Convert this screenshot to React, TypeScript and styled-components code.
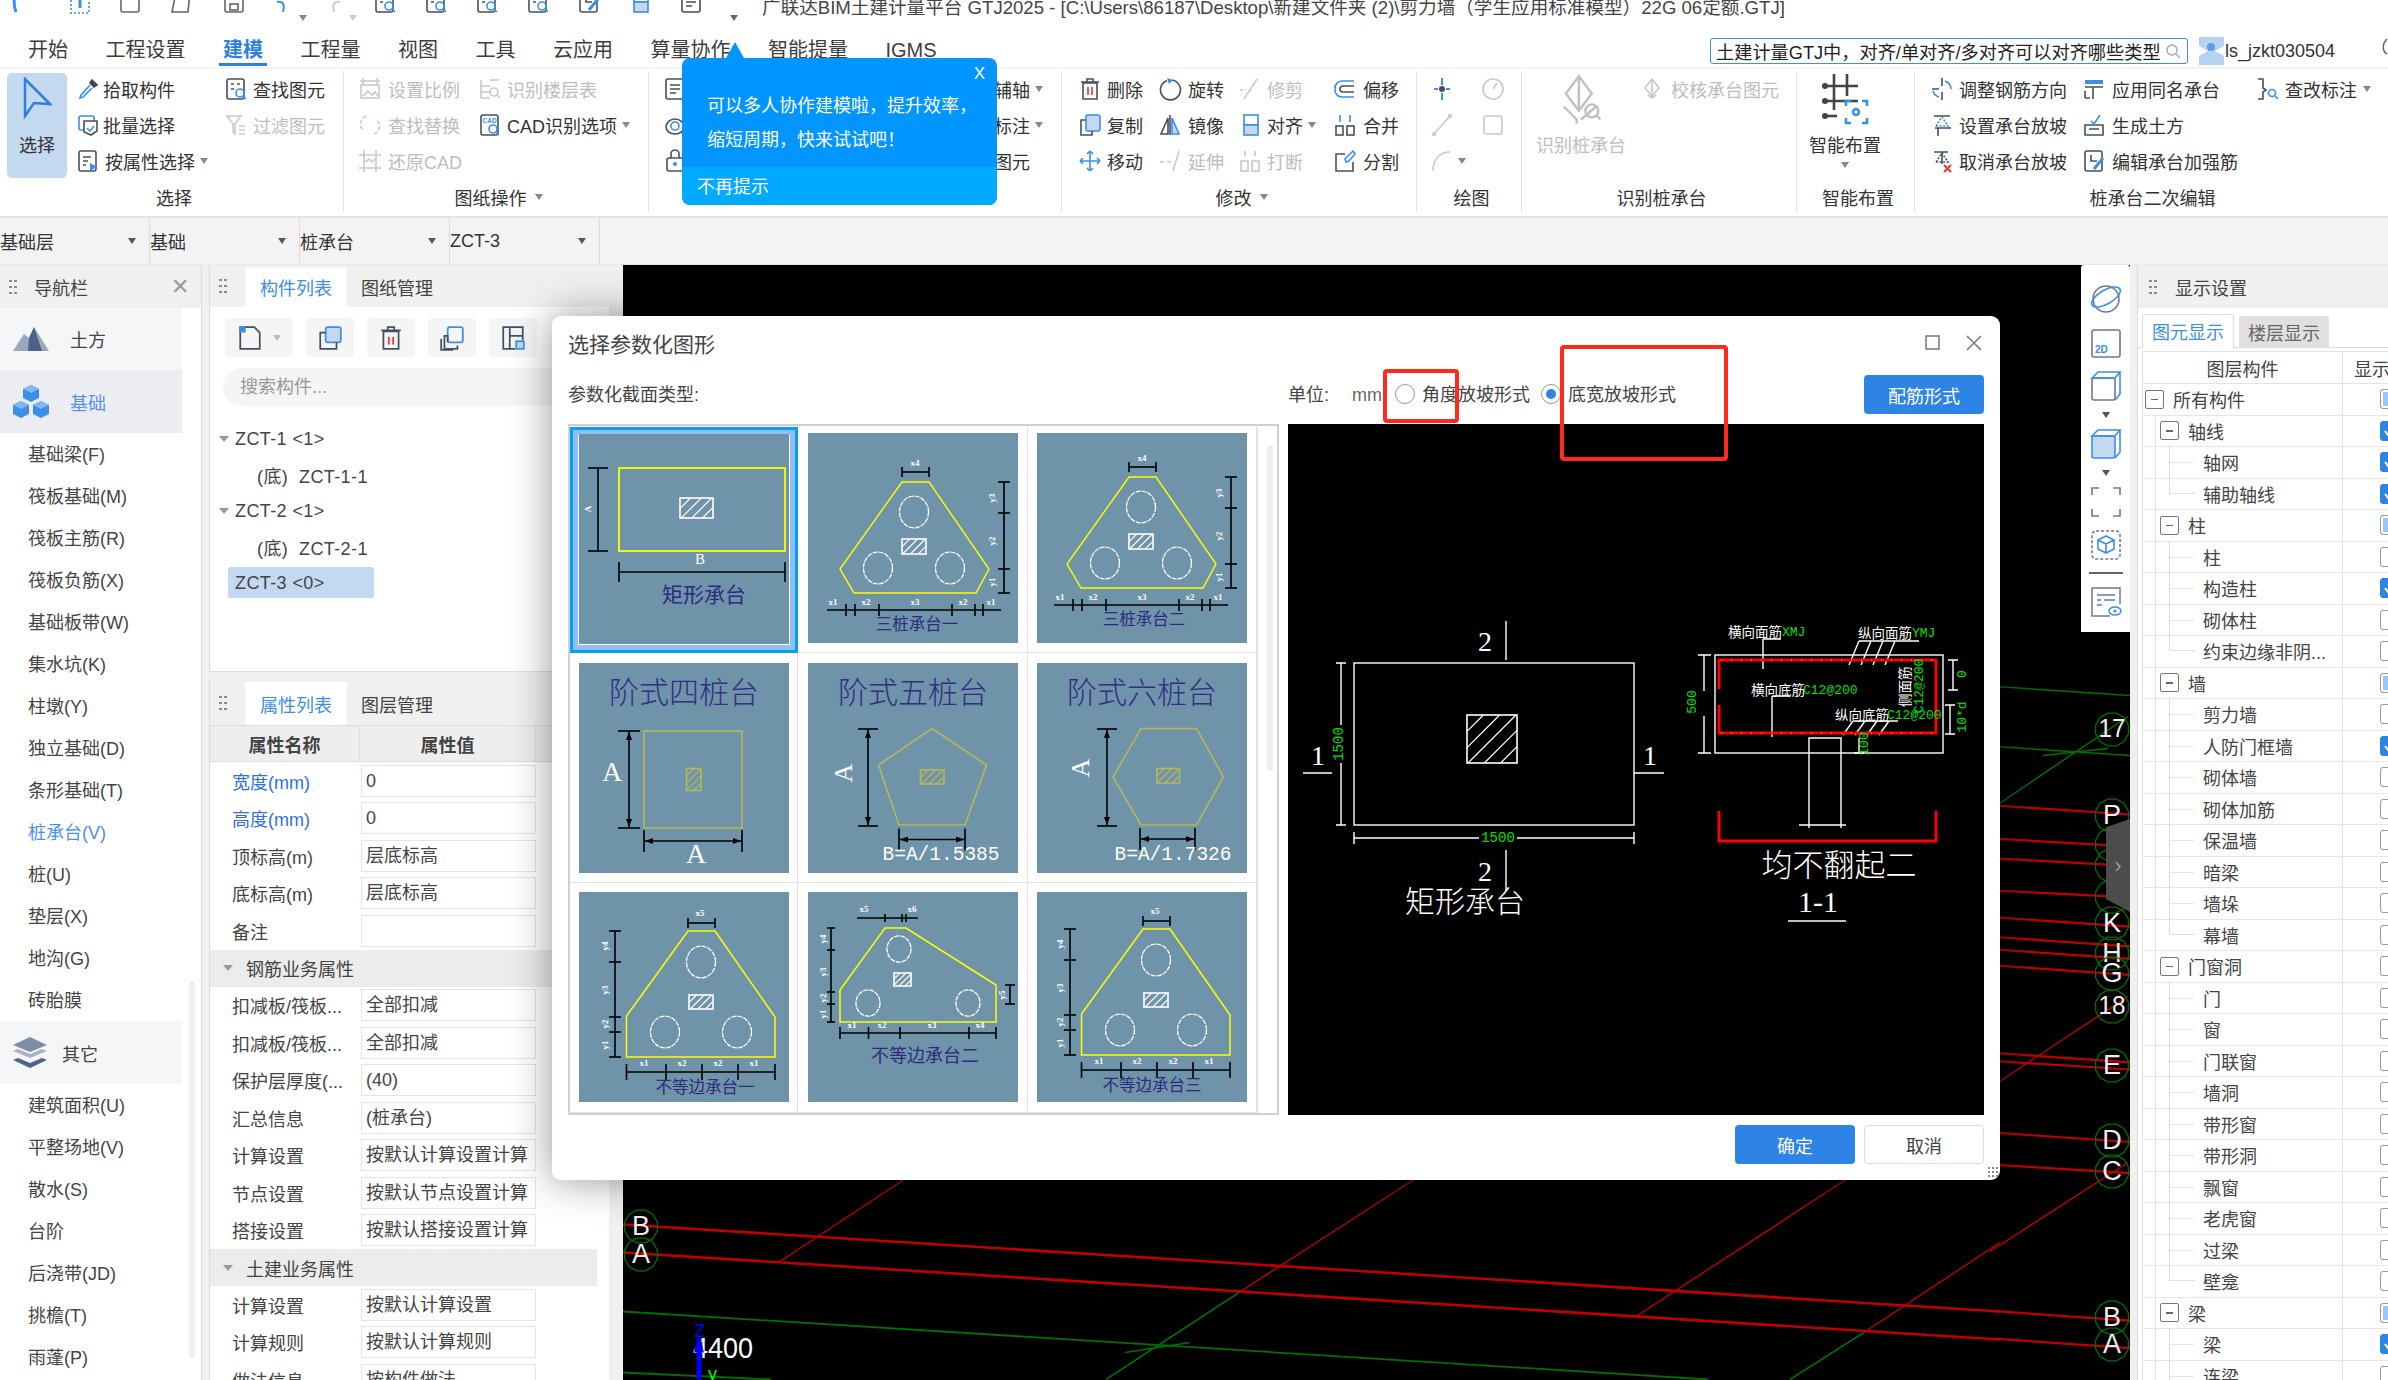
import React from 'react';
import styled, { createGlobalStyle } from 'styled-components';

const FONT = '"Liberation Sans","Noto Sans CJK SC",sans-serif';
const SERIF = '"Liberation Serif","Noto Sans CJK SC",serif';
const MONO = '"Liberation Mono","Noto Sans CJK SC",monospace';
const BLUE = '#3b8fe8';
const INK = '#465061';
const DIS = '#c9c9c9';

const Global = createGlobalStyle`
  html, body { margin: 0; padding: 0; background: #fff; }
  #root { width: 2388px; height: 1380px; }
  * { box-sizing: border-box; }
`;

const Page = styled.div`
  position: relative; width: 2388px; height: 1380px; overflow: hidden;
  display: flex; flex-direction: column; background: #fff;
  font-family: ${FONT}; font-size: 18px; color: #333;
`;

/* ---------- title bar ---------- */
const TitleBar = styled.div`
  height: 35px; flex: none; display: flex; align-items: flex-start; overflow: hidden;
`;
const TitleSlot = styled.div<{ $w: number }>`
  width: ${p => p.$w}px; flex: none; margin-top: -10px; height: 24px;
`;
const TitleText = styled.div`
  font-size: 18.6px; line-height: 18px; margin-top: -1px; margin-left: -14px; white-space: nowrap; color: #444;
`;

/* ---------- tabs ---------- */
const TabsRow = styled.div`
  height: 32px; flex: none; display: flex; padding-left: 28px; gap: 37.5px; align-items: flex-start;
  position: relative; z-index: 1;
`;
const MenuTab = styled.div<{ $on?: boolean }>`
  position: relative; font-size: 20px; line-height: 30px; color: ${p => (p.$on ? '#2d7fe0' : '#3d3d3d')};
  font-weight: ${p => (p.$on ? 600 : 400)};
  ${p => p.$on && `&::after{content:'';position:absolute;left:-4px;right:-4px;top:28px;height:3px;background:#2d7fe0;}`}
`;
const SearchArea = styled.div`
  margin-left: auto; display: flex; align-items: center; height: 26px; margin-top: 3px; padding-right: 0;
`;
const SearchBox = styled.div`
  width: 478px; height: 26px; border: 1.5px solid ${BLUE}; border-radius: 3px; display: flex; align-items: center;
  padding: 0 5px; justify-content: space-between; color: #222; font-size: 18.2px; white-space: nowrap; overflow: hidden;
`;
const UserName = styled.div`
  font-size: 18px; width: 155px; color: #333; white-space: nowrap; flex: none;
`;

/* ---------- ribbon ---------- */
const Ribbon = styled.div`
  height: 151px; flex: none; display: flex; border-top: 2px solid #f4f4f4; border-bottom: 2px solid #e4e4e4;
`;
const RGroup = styled.div<{ $w: number; $last?: boolean }>`
  width: ${p => p.$w}px; flex: none; display: flex; flex-direction: column; margin: 2px 0 5px;
  border-right: ${p => (p.$last ? 'none' : '1px solid #dfdfdf')};
`;
const RBody = styled.div<{ $pl?: number }>`
  flex: none; height: 111px; display: flex; padding-left: ${p => p.$pl ?? 0}px;
`;
const RLabel = styled.div`
  flex: 1; display: flex; align-items: center; justify-content: center; gap: 8px; font-size: 18px; color: #333; padding-left: 5px;
`;
const Caret = styled.span<{ $c?: string }>`
  display: inline-block; width: 0; height: 0; border-left: 4px solid transparent; border-right: 4px solid transparent;
  border-top: 6px solid ${p => p.$c ?? '#888'};
`;
const RCol = styled.div<{ $w?: number }>`
  flex: none; width: ${p => (p.$w ? p.$w + 'px' : 'auto')}; display: flex; flex-direction: column;
`;
const Tool = styled.div<{ $off?: boolean; $gap?: number }>`
  height: 36.2px; display: flex; align-items: center; gap: ${p => p.$gap ?? 5}px; white-space: nowrap;
  color: ${p => (p.$off ? '#bdbdbd' : '#333')}; font-size: 18px;
`;
const BigSelect = styled.div`
  width: 60px; height: 105px; background: #c4d9f0; border-radius: 5px; flex: none; margin: 2px 9px 0 7px;
  display: flex; flex-direction: column; align-items: center; padding-top: 4px; gap: 12px; font-size: 18px;
`;
const BigTool = styled.div<{ $w: number; $off?: boolean }>`
  width: ${p => p.$w}px; flex: none; display: flex; flex-direction: column; align-items: center; gap: 5px; padding-top: 3px;
  color: ${p => (p.$off ? '#bdbdbd' : '#333')}; font-size: 18px;
`;

/* ---------- popup ---------- */
const Tip = styled.div`
  position: absolute; left: 682px; top: 58px; width: 315px; height: 147px; background: #0095ff; border-radius: 8px;
  color: #fff; z-index: 5; overflow: visible; display: flex; flex-direction: column;
  &::before { content: ''; position: absolute; left: 44px; top: -16px; width: 0; height: 0;
    border-left: 9px solid transparent; border-right: 9px solid transparent; border-bottom: 16px solid #0095ff; }
`;
const TipClose = styled.div`
  position: absolute; right: 12px; top: 7px; font-size: 17px; font-weight: 300; line-height: 18px;
`;
const TipBody = styled.div`
  flex: 1; padding: 31px 0 0 25px; font-size: 18px; line-height: 34px; white-space: nowrap;
`;
const TipFoot = styled.div`
  height: 38px; background: #00aaff; border-radius: 0 0 8px 8px; padding-left: 15px; font-size: 18px; line-height: 40px;
`;

/* ---------- selector bar ---------- */
const SelectorBar = styled.div`
  height: 47px; flex: none; background: #f3f3f3; display: flex; border-bottom: 1px solid #e8e8e8;
`;
const SelectorCell = styled.div`
  width: 150px; flex: none; display: flex; align-items: center; justify-content: space-between;
  padding-right: 13px; border-right: 1px solid #dcdcdc; color: #333; font-size: 18px;
`;

/* ---------- main ---------- */
const Main = styled.div`
  flex: 1; display: flex; min-height: 0; background: #f0f0f0;
`;
const Nav = styled.div`
  width: 202px; flex: none; background: #fff; position: relative; border-right: 1px solid #ddd;
`;
const PanelHead = styled.div<{ $h?: number }>`
  height: ${p => p.$h ?? 42}px; background: #f0f0f0; display: flex; align-items: stretch; flex: none; font-size: 18px; color: #444;
`;
const Grip = styled.div`
  width: 10px; height: 18px; margin: auto 0 auto 8px; flex: none;
  background-image: radial-gradient(circle, #8a8a8a 1.3px, transparent 1.5px);
  background-size: 5px 6px;
`;
const NavTitle = styled.div`
  flex: 1; display: flex; align-items: center; padding-left: 16px; justify-content: space-between; padding-right: 12px;
`;
const CloseX = styled.span`
  color: #999; font-size: 22px; line-height: 22px; font-weight: 300;
`;
const NavCat = styled.div<{ $on?: boolean; $h: number }>`
  width: 182px; height: ${p => p.$h}px; display: flex; align-items: center; gap: 20px; padding-left: 12px;
  background: ${p => (p.$on ? '#ecedf0' : '#f5f6f8')}; color: ${p => (p.$on ? '#5b8ff0' : '#444')}; font-size: 18px;
`;
const NavItem = styled.div<{ $on?: boolean }>`
  height: 42px; line-height: 45px; padding-left: 28px; font-size: 18px; color: ${p => (p.$on ? '#4a90f0' : '#444')}; white-space: nowrap;
`;
const NavScroll = styled.div`
  position: absolute; left: 189px; top: 716px; width: 6px; height: 377px; background: #eee; border-radius: 3px;
`;

const MidCol = styled.div`
  width: 400px; flex: none; margin-left: 7px; margin-right: 14px; display: flex; flex-direction: column; gap: 8px;
`;
const Panel = styled.div<{ $h: number }>`
  height: ${p => p.$h}px; flex: none; background: #fff; display: flex; flex-direction: column; border: solid #ddd; border-width: 0 0 1.5px 1.5px;
`;
const HeadTab = styled.div<{ $on?: boolean }>`
  width: 102px; display: flex; align-items: center; justify-content: center; margin-top: 2px;
  background: ${p => (p.$on ? '#fff' : 'transparent')}; color: ${p => (p.$on ? BLUE : '#444')};
`;
const ToolRow = styled.div`
  display: flex; padding: 11px 0 0 15px; gap: 13px; height: 50px; flex: none;
`;
const ToolBtn = styled.div<{ $w?: number }>`
  width: ${p => p.$w ?? 48}px; height: 39px; background: #f5f5f5; border-radius: 4px; display: flex; align-items: center; justify-content: center; gap: 10px; flex: none;
`;
const SearchInput = styled.div`
  margin: 11px 0 0 13px; height: 38px; border-radius: 19px 0 0 19px; background: #f5f5f5; color: #999; padding-left: 17px;
  line-height: 38px; font-size: 18px; flex: none;
`;
const Tree = styled.div`
  padding: 15px 0 0 0;
`;
const TreeRow = styled.div<{ $lv?: number; $sel?: boolean }>`
  height: 36px; display: flex; align-items: center; white-space: pre; font-size: 18px; color: #444; letter-spacing: .4px;
  padding-left: ${p => (p.$lv ? 47 : 9)}px; position: relative; gap: 3px;
  ${p => p.$sel && `&::before{content:'';position:absolute;left:18px;width:146px;top:2px;height:31px;background:#c3d9f1;border-radius:3px;z-index:0;}`}
  & > span { position: relative; z-index: 1; }
`;
const TreeGap = styled.span`
  width: 13px; display: inline-block; flex: none;
`;
const Arrow = styled.span`
  width: 0; height: 0; border-left: 5px solid transparent; border-right: 5px solid transparent; border-top: 6px solid #999; flex: none; margin-right: 3px; margin-left: 0;
`;
const TableHead = styled.div`
  height: 37px; flex: none; background: #eee; display: flex; border-top: 1px solid #ddd; border-bottom: 1.5px solid #ddd; font-weight: 600; color: #444;
`;
const HeadCell = styled.div<{ $w: number }>`
  width: ${p => p.$w}px; flex: none; display: flex; align-items: center; justify-content: center; border-right: 1.5px solid #ddd; overflow: hidden;
`;
const PropRow = styled.div`
  height: 37.5px; flex: none; display: flex; align-items: center;
`;
const PropLabel = styled.div<{ $blue?: boolean }>`
  width: 151px; flex: none; padding-left: 22px; color: ${p => (p.$blue ? '#2f6fe4' : '#444')}; white-space: nowrap; overflow: hidden; font-size: 18px;
`;
const PropValue = styled.div`
  width: 175px; height: 32px; border: 1.5px solid #e4e4e4; line-height: 31px; padding-left: 4px; font-size: 18px; color: #444; white-space: nowrap; overflow: hidden;
`;
const Section = styled.div`
  height: 37px; flex: none; background: #ececec; display: flex; align-items: center; padding-left: 13px; gap: 10px; font-size: 18px; color: #444; width: 387px;
`;

/* ---------- canvas ---------- */
const Canvas = styled.div`
  width: 1507px; flex: none; background: #000; position: relative; overflow: hidden;
`;
const CanvasArt = styled.svg`
  position: absolute; inset: 0; width: 100%; height: 100%;
`;
const ViewBar = styled.div`
  position: absolute; right: 0; top: 0; width: 49px; height: 367px; background: #fff; border-radius: 3px 3px 0 0; display: flex;
  flex-direction: column; align-items: center; padding-top: 11px;
`;
const ViewGap = styled.div<{ $h: number }>`
  height: ${p => p.$h}px; flex: none; display: flex; align-items: center; justify-content: center;
`;
const ViewSep = styled.div`
  width: 34px; height: 1.5px; background: #666; flex: none; margin: 4px 0 8px;
`;
const Handle = styled.div`
  position: absolute; right: 0; top: 554px; width: 24px; height: 93px; background: #4c4c4c; color: #999; font-size: 22px;
  clip-path: polygon(0 9%, 100% 0, 100% 100%, 0 86%); display: flex; align-items: center; justify-content: center;
`;

/* ---------- right panel ---------- */
const RightPanel = styled.div`
  width: 251px; flex: none; margin-left: 7px; background: #fff; display: flex; flex-direction: column; overflow: hidden; border-left: 1.5px solid #ddd;
`;
const RightTitle = styled.div`
  flex: 1; display: flex; align-items: center; padding-left: 17px; font-size: 18px; color: #444;
`;
const RTabs = styled.div`
  height: 40px; flex: none; display: flex; align-items: flex-end; padding-left: 4px; gap: 5px; border-bottom: 1.5px solid #ddd;
`;
const RTab = styled.div<{ $on?: boolean }>`
  width: ${p => (p.$on ? 92 : 90)}px; height: ${p => (p.$on ? 35 : 31)}px; display: flex; align-items: center; justify-content: center;
  border-radius: 3px 3px 0 0; font-size: 18px;
  ${p => (p.$on ? `color:${BLUE};border:1.5px solid #ddd;border-bottom:1.5px solid #fff;margin-bottom:-1.5px;background:#fff;` : 'background:#e0e0e0;color:#666;')}
`;
const LayerTable = styled.div`
  margin: 3px 0 0 4px; border-top: 1.5px solid #e2e2e2; border-left: 1.5px solid #e2e2e2;
`;
const LayerHead = styled.div`
  height: 32px; display: flex; border-bottom: 1.5px solid #e2e2e2; font-size: 18px; color: #444;
`;
const LayerName = styled.div`
  width: 200px; flex: none; border-right: 1.5px solid #e2e2e2; display: flex; align-items: center; justify-content: center;
`;
const LayerShow = styled.div`
  padding-left: 11px; display: flex; align-items: center; white-space: nowrap;
`;
const LayerRow = styled.div`
  height: 31.5px; display: flex; border-bottom: 1.5px solid #e6e6e6; font-size: 18px; color: #444;
`;
const LayerCell = styled.div<{ $lv: number; $leafLast?: boolean; $first?: boolean }>`
  width: 200px; flex: none; position: relative; border-right: 1.5px solid #e2e2e2; display: flex; align-items: center; white-space: nowrap;
  padding-left: ${p => (p.$lv === 0 ? 2 : p.$lv === 1 ? 17 : 60)}px; gap: 9px;
  ${p => !p.$first && `&::before{content:'';position:absolute;left:12px;top:-1px;bottom:-1px;width:1px;background:#e2e2e2;}`}
  ${p => p.$lv === 2 && `&::after{content:'';position:absolute;left:26px;top:${p.$leafLast ? '-1px' : '-1px'};bottom:${p.$leafLast ? '50%' : '-1px'};width:25px;border-left:1px solid #ddd;border-bottom:${p.$leafLast ? '1px solid #e2e2e2' : '0'};}`}
`;
const LeafTick = styled.i`
  position: absolute; left: 26px; width: 25px; top: 50%; height: 1px; background: #e6e6e6;
`;
const Expander = styled.span`
  width: 19px; height: 19px; border: 1.5px solid #777; border-radius: 2px; background: #fff; flex: none; position: relative; z-index: 1;
  display: flex; align-items: center; justify-content: center;
  &::after { content: ''; width: 7px; height: 1.5px; background: #666; }
`;
const CheckCell = styled.div`
  padding-left: 37px; display: flex; align-items: center;
`;
const Check = styled.span<{ $s: 0 | 1 | 2 }>`
  width: 20px; height: 20px; flex: none; border-radius: 3px; display: flex; align-items: center; justify-content: center; color: #fff;
  border: 1.5px solid ${p => (p.$s === 1 ? '#2d84e4' : '#999')}; background: ${p => (p.$s === 1 ? '#2d84e4' : '#fff')};
  ${p => p.$s === 2 && `box-shadow: inset 0 0 0 2px #fff; background:#9cc6f5;`}
`;

/* ---------- dialog ---------- */
const Dialog = styled.div`
  position: absolute; left: 552px; top: 316px; width: 1448px; height: 864px; background: #fff; border-radius: 9px; z-index: 4;
  box-shadow: 0 0 42px rgba(0,0,0,.42); padding: 0 16px; display: flex; flex-direction: column;
`;
const DlgHead = styled.div`
  height: 59px; flex: none; display: flex; align-items: center; justify-content: space-between; font-size: 21px; color: #444; padding-bottom: 6px;
`;
const WinBtns = styled.div`
  display: flex; gap: 26px; align-items: center; padding-right: 2px;
`;
const DlgOptions = styled.div`
  height: 49px; flex: none; display: flex; align-items: flex-start;
`;
const OptLabel = styled.div<{ $w?: number; $muted?: boolean }>`
  font-size: 18px; line-height: 40px; color: ${p => (p.$muted ? '#666' : '#444')}; white-space: nowrap;
  ${p => p.$w && `width:${p.$w}px;`}
`;
const OptRight = styled.div`
  margin-left: auto; width: 696px; display: flex; align-items: flex-start;
`;
const Radio = styled.span<{ $on?: boolean }>`
  width: 20px; height: 20px; border-radius: 50%; border: 1.5px solid #999; flex: none; margin: 9px 7px 0 0; background: #fff;
  display: flex; align-items: center; justify-content: center;
  ${p => p.$on && `&::after{content:'';width:10px;height:10px;border-radius:50%;background:#2d84e4;}`}
`;
const PrimaryBtn = styled.div<{ $ml?: string }>`
  width: 120px; height: 39px; border-radius: 4px; background: #2d84e4; color: #fff; display: flex; align-items: center; justify-content: center;
  font-size: 18px; margin-left: ${p => p.$ml ?? '0'}; flex: none;
`;
const GhostBtn = styled.div`
  width: 120px; height: 39px; border-radius: 4px; background: #fff; border: 1.5px solid #ddd; color: #444; display: flex; align-items: center; justify-content: center; font-size: 18px; flex: none;
`;
const DlgBody = styled.div`
  height: 691px; flex: none; display: flex; gap: 9px;
`;
const ShapeFrame = styled.div`
  width: 711px; flex: none; border: 2px solid #d0d0d0; display: flex; padding-top: 1px;
`;
const ShapeGrid = styled.div`
  width: 687px; flex: none; display: grid; grid-template-columns: 228px 230px 229px; grid-template-rows: 226px 230px 230px;
`;
const ShapeCell = styled.div<{ $pt: number; $sel?: boolean }>`
  border: solid #e2e2e2; border-width: 0 1.5px 1.5px 0; display: flex; justify-content: center; padding-top: ${p => p.$pt}px; background: #fff;
  ${p => p.$sel && `border: 3px solid #0a9bff; box-shadow: inset 0 0 0 5px #8dc0f5; padding-top: 4px;`}
`;
const Thumb = styled.svg`
  width: 210px; height: 210px; background: #6f93a8; display: block; flex: none;
`;
const ScrollTrack = styled.div`
  flex: 1; border-left: 1px solid #e2e2e2; padding: 18px 0 0 9px;
`;
const ScrollThumb = styled.div`
  width: 6px; height: 326px; background: #eee; border-radius: 3px;
`;
const Preview = styled.svg`
  width: 696px; height: 691px; background: #000; flex: none; display: block;
`;
const DlgFoot = styled.div`
  flex: 1; display: flex; justify-content: flex-end; gap: 9px; padding-top: 10px;
`;
const ResizeDots = styled.div`
  position: absolute; right: 2px; bottom: 3px; width: 11px; height: 11px;
  background-image: radial-gradient(circle, #8a8a8a 1px, transparent 1.2px); background-size: 4px 4px;
`;
const RedBox = styled.div<{ $x: number; $y: number; $w: number; $h: number }>`
  position: absolute; left: ${p => p.$x}px; top: ${p => p.$y}px; width: ${p => p.$w}px; height: ${p => p.$h}px;
  border: 4px solid #ff2a1a; border-radius: 4px; z-index: 6;
`;

/* ---------- icons ---------- */
const Svg: React.FC<{ s?: number; children: React.ReactNode }> = ({ s = 24, children }) => (
  <svg width={s} height={s} viewBox="0 0 24 24" fill="none" strokeWidth={1.6} style={{ flex: 'none', display: 'block' }}>{children}</svg>
);
const icons: Record<string, React.ReactNode> = {
  pick: <g><path d="M16 3l5 5-3 2-4-4z" fill="#445" stroke="#445" /><path d="M14 8L5 18l-1 3 3-1 9-9" stroke={BLUE} /></g>,
  batch: <g><rect x="3" y="3" width="15" height="14" rx="2" stroke={BLUE} /><path d="M8 8h13v10l-6 4-7-3z" stroke={INK} fill="#fff" /><path d="M11 15l3 3 4-5" stroke={BLUE} /></g>,
  attr: <g><rect x="3" y="2" width="17" height="20" rx="2" stroke={INK} /><path d="M7 8h8M7 12h5M7 16h3" stroke={INK} /><path d="M14 14l7 4-7 4z" fill={BLUE} /></g>,
  find: <g><rect x="3" y="2" width="17" height="20" rx="2" stroke={INK} /><path d="M7 7h3M13 7h3M7 12h3" stroke={INK} /><circle cx="16" cy="16" r="4" stroke={BLUE} /><path d="M19 19l3 3" stroke={BLUE} /></g>,
  filter: <g stroke={DIS}><path d="M3 3h14l-6 8v10l-2-2v-8zM15 13h6M15 17h6M15 21h6" /></g>,
  scale: <g stroke={DIS}><path d="M2 4h20M5 1v6M19 1v6" /><rect x="3" y="8" width="18" height="13" /><path d="M5 19l5-5 4 4 3-3 3 4" /></g>,
  floor: <g stroke={DIS}><path d="M3 3v18h9M3 9h9M3 15h9M12 3H21" /><circle cx="16" cy="15" r="4" /><path d="M19 18l3 3" /></g>,
  replace: <g stroke={DIS}><path d="M8 3C3 5 2 10 3 14l3 4M16 21c5-2 6-7 5-11l-3-4" strokeDasharray="4 2" /></g>,
  cad: <g><rect x="3" y="2" width="17" height="20" rx="2" stroke={INK} /><text x="4.5" y="10" fontSize="6.5" fill={BLUE} stroke="none" fontFamily={FONT} fontWeight="700">CAD</text><circle cx="15" cy="16" r="4" stroke={BLUE} /><path d="M18 19l3 3" stroke={BLUE} /></g>,
  restore: <g stroke={DIS}><path d="M6 1v22M18 1v22M1 6h22M1 19h22" /><path d="M7 13l4-3 3 3 3-3" /></g>,
  c1: <g><rect x="3" y="2" width="18" height="20" rx="2" stroke={INK} /><path d="M7 8h10M7 12h10M7 16h6" stroke={INK} /></g>,
  c2: <g><path d="M3 14a9 8 0 1 1 18 0c0 4-4 7-9 7s-9-3-9-7z" stroke={INK} /><circle cx="12" cy="13" r="4" stroke={BLUE} /></g>,
  c3: <g><rect x="4" y="9" width="16" height="13" rx="2" stroke={INK} /><path d="M8 9V5a4 4 0 0 1 8 0v4" stroke={INK} /><circle cx="12" cy="15" r="2" fill={BLUE} /></g>,
  del: <g><path d="M5 6h14v16H5zM3 5h18M9 5V2h6v3" stroke={INK} /><path d="M10 10v8M14 10v8" stroke="#e33" /></g>,
  rot: <g><path d="M14 3a10 10 0 1 1-5 .5" stroke={INK} /><path d="M9 1l6 2-4 4z" fill={BLUE} /></g>,
  trim: <g stroke={DIS}><path d="M19 2L6 22" /><path d="M2 13h6M11 13h2" strokeDasharray="3 2" /></g>,
  off: <g><path d="M21 4H9a7 7 0 0 0-7 8 7 7 0 0 0 7 8h12" stroke={BLUE} /><path d="M21 9h-11a3 3 0 0 0 0 6h11" stroke={INK} /></g>,
  copy: <g><rect x="8" y="2" width="14" height="16" rx="2" fill="#c4d9f0" stroke={BLUE} /><path d="M8 7H3v15h11v-4" stroke={INK} /></g>,
  mir: <g><path d="M12 2v20" stroke={INK} /><path d="M10 5L3 21h7z" stroke={INK} /><path d="M14 5l7 16h-7z" fill="#c4d9f0" stroke={BLUE} /></g>,
  align: <g><rect x="6" y="2" width="14" height="10" stroke={BLUE} /><rect x="6" y="12" width="14" height="10" fill="#c4d9f0" stroke={BLUE} /></g>,
  merge: <g><path d="M7 2v7M17 2v7" stroke={BLUE} /><rect x="3" y="13" width="7" height="9" stroke={INK} /><rect x="14" y="13" width="7" height="9" stroke={INK} /></g>,
  move: <g stroke={BLUE}><path d="M12 2v20M2 12h20M12 2l-3 3M12 2l3 3M12 22l-3-3M12 22l3-3M2 12l3-3M2 12l3 3M22 12l-3-3M22 12l-3 3" /></g>,
  ext: <g stroke={DIS}><path d="M2 13h4M9 13h4" /><path d="M21 2L15 22" /></g>,
  brk: <g stroke={DIS}><path d="M7 2v5M17 2v5" /><rect x="3" y="12" width="7" height="10" /><rect x="14" y="12" width="7" height="10" /></g>,
  split: <g><path d="M12 5H3v17h17v-9" stroke={INK} /><path d="M20 2l-8 8 1 3 3-1 6-7z" stroke={BLUE} /></g>,
  pt: <g><path d="M12 1v7M12 16v7M4 12h4M16 12h4" stroke={BLUE} strokeWidth="2" /><circle cx="12" cy="12" r="3" fill="#4a4a6a" /></g>,
  ang: <g stroke={DIS}><circle cx="12" cy="12" r="10" /><path d="M12 12l4-6" /></g>,
  line: <g stroke={DIS}><path d="M4 21L20 3" /><circle cx="4" cy="21" r="1.5" /><circle cx="20" cy="3" r="1.5" /></g>,
  rect: <g stroke={DIS}><rect x="3" y="3" width="18" height="18" rx="2" /></g>,
  arc: <g stroke={DIS}><path d="M3 22C3 10 10 3 20 3" /></g>,
  check: <g stroke={DIS}><path d="M12 2l7 9-7 8-7-8zM12 2v17" /><path d="M12 21l-4-3M12 21l4-3" /></g>,
  slope: <g><path d="M4 3h16M5 15h16" stroke={INK} /><path d="M6 13L12 4l6 9z" stroke={BLUE} strokeDasharray="2 1.5" /><path d="M8 15v8" stroke={INK} /></g>,
  unslope: <g><path d="M4 3h14M12 3v12" stroke={INK} /><path d="M6 13L12 4l6 9z" stroke={INK} strokeDasharray="2 1.5" /><path d="M14 16l7 7M21 16l-7 7" stroke="#e33" strokeWidth="2" /></g>,
  rebar: <g><path d="M12 1v8M12 15v8M2 12h7" stroke={INK} /><path d="M15 4a9 9 0 0 1 6 8M9 20a9 9 0 0 1-6-6" stroke={BLUE} /></g>,
  same: <g><path d="M3 3h18v4H3z" fill={BLUE} /><path d="M3 10h18M11 10v12M3 21h5M3 14v7" stroke={INK} /></g>,
  earth: <g><path d="M3 22h18V12H3zM7 16h10" stroke={INK} /><path d="M9 8l3 3 6-9" stroke={BLUE} /></g>,
  edit: <g><rect x="3" y="2" width="17" height="20" rx="2" stroke={INK} /><path d="M9 6v6h6" stroke={INK} /><path d="M21 9l-9 11" stroke={BLUE} strokeWidth="3" /></g>,
  mark: <g><path d="M3 2h5v9l3 2-3 2v7H3" stroke={INK} /><circle cx="17" cy="16" r="3.5" stroke={BLUE} /><path d="M20 19l3 3" stroke={BLUE} /></g>,
};
const I: React.FC<{ n: string; s?: number }> = ({ n, s }) => <Svg s={s}>{icons[n]}</Svg>;

/* ---------- ribbon data ---------- */
const T: React.FC<{ i?: string; t?: string; off?: boolean; gap?: number; dd?: boolean }> = ({ i, t, off, gap, dd }) => (
  <Tool $off={off} $gap={gap}>{i && <I n={i} />}{t && <span>{t}</span>}{dd && <Caret />}</Tool>
);

const TitleCaretSlot = styled(TitleSlot)`
  margin-top: 5px;
`;
const TitleIcons = () => {
  const B = BLUE;
  const slots: [number, React.ReactNode, boolean?][] = [
    [62, <Svg><path d="M12 4C6 8 8 16 10 22" stroke={B} strokeWidth="3" /></Svg>],
    [50, <Svg><rect x="3" y="2" width="18" height="21" stroke={B} strokeDasharray="2 2" /><path d="M12 6v12" stroke={B} strokeWidth="3" /></Svg>],
    [51, <Svg><rect x="3" y="2" width="18" height="20" rx="2" stroke="#666" /></Svg>],
    [53, <Svg><path d="M7 2h14l-2 20H3z" stroke="#666" /></Svg>],
    [49, <Svg><rect x="3" y="2" width="18" height="20" rx="2" stroke="#666" /><rect x="8" y="14" width="8" height="6" stroke="#666" /></Svg>],
    [28, <Svg><path d="M6 12c6-1 8 2 6 10" stroke={B} strokeWidth="2" /></Svg>],
    [23, <Caret />, true],
    [27, <Svg><path d="M18 12c-6-1-8 2-6 10" stroke="#ccc" strokeWidth="2" /></Svg>],
    [24, <Caret $c="#ccc" />, true],
  ];
  const rest = ['find', 'find', 'find', 'find', 'edit', 'align', 'c1'];
  return (
    <>
      <TitleSlot $w={6} />
      {slots.map(([w, n, c], k) => (c
        ? <TitleCaretSlot key={k} $w={w}>{n}</TitleCaretSlot>
        : <TitleSlot key={k} $w={w}>{n}</TitleSlot>))}
      {rest.map((n, k) => <TitleSlot key={k} $w={51}><I n={n} /></TitleSlot>)}
      <TitleCaretSlot $w={46}><Caret $c="#666" /></TitleCaretSlot>
    </>
  );
};

/* ---------- thumbnails ---------- */
const Dim = styled.g`stroke: #000; stroke-width: 1.6; fill: none;`;
const V: React.FC<{ x: number; t: number[]; w?: number }> = ({ x, t, w = 5 }) => (
  <Dim>
    <path d={`M${x} ${t[0]}V${t[t.length - 1]}`} />
    {t.map((y, k) => <path key={k} d={`M${x - w} ${y}H${x + w}`} />)}
  </Dim>
);
const H: React.FC<{ y: number; t: number[]; x1?: number; x2?: number; h?: number }> = ({ y, t, x1, x2, h = 6 }) => (
  <Dim>
    <path d={`M${x1 ?? t[0]} ${y}H${x2 ?? t[t.length - 1]}`} />
    {t.map((x, k) => <path key={k} d={`M${x} ${y - h}V${y + h}`} />)}
  </Dim>
);
const Hatch: React.FC<{ x: number; y: number; w: number; h: number; c?: string; n?: number }> = ({ x, y, w, h, c = '#fff', n = 4 }) => {
  const st = (w + h) / (n + 1);
  const ls = [];
  for (let k = 1; k <= n; k++) {
    const d = k * st;
    const x1 = Math.max(0, d - h), y1 = d > h ? h : d, x2 = Math.min(w, d), y2 = d > w ? d - w : 0;
    ls.push(<path key={k} d={`M${x + x1} ${y + y1}L${x + x2} ${y + y2}`} />);
  }
  return <g stroke={c} strokeWidth="1.2" fill="none"><rect x={x} y={y} width={w} height={h} strokeWidth="1.6" />{ls}</g>;
};
const Pile: React.FC<{ x: number; y: number; r: number }> = ({ x, y, r }) => (
  <ellipse cx={x} cy={y} rx={r} ry={r * 1.1} fill="none" stroke="#fff" strokeWidth="1.3" strokeDasharray="5 1" />
);
const Mini: React.FC<{ x: number; y: number; t: string; r?: boolean }> = ({ x, y, t, r }) => (
  <text x={x} y={y} fontSize="9" fontWeight="700" fill="#fff" fontFamily={SERIF} textAnchor="middle" dominantBaseline="middle" transform={r ? `rotate(-90 ${x} ${y})` : undefined}>{t}</text>
);
const Caption: React.FC<{ x: number; y: number; t: string; s?: number }> = ({ x, y, t, s = 16 }) => (
  <text x={x} y={y} fontSize={s} fill="#2b2b80" fontFamily={SERIF} textAnchor="middle" dominantBaseline="middle">{t}</text>
);
const Big: React.FC<{ x: number; y: number; t: string; r?: boolean; s?: number; f?: string; c?: string; w?: number }> = ({ x, y, t, r, s = 28, f = SERIF, c = '#fff', w }) => (
  <text x={x} y={y} fontSize={s} fill={c} fontFamily={f} fontWeight={w} textAnchor="middle" dominantBaseline="middle" transform={r ? `rotate(-90 ${x} ${y})` : undefined}>{t}</text>
);
const Y = '#ffff00', OL = '#b5b85a', HEAD = '#2f2f85';

const RectThumb = () => (
  <Thumb viewBox="0 0 210 210">
    <rect x="40" y="34" width="166" height="83" fill="none" stroke={Y} strokeWidth="1.8" />
    <V x={19} t={[34, 117]} w={10} />
    <Mini x={10} y={75} t="A" r />
    <Hatch x={101} y={64} w={33} h={20} />
    <H y={138} t={[40, 206]} h={10} />
    <Big x={121} y={127} t="B" s={15} />
    <Caption x={125} y={163} t="矩形承台" s={21} />
  </Thumb>
);
const TriThumb: React.FC<{ dx: number; dy: number; label: string }> = ({ dx, dy, label }) => (
  <Thumb viewBox="0 0 210 210">
    <g transform={`translate(${dx} ${dy})`}>
      <polygon points="94,49 121,49 181,136 168,160 46,160 32,136" fill="none" stroke={Y} strokeWidth="1.4" />
      <Pile x={106} y={79} r={14.5} /><Pile x={70} y={135} r={14.5} /><Pile x={142} y={135} r={14.5} />
      <Hatch x={94} y={106} w={24} h={15} />
      <H y={39} t={[94, 121]} h={5} /><Mini x={107} y={31} t="x4" />
      <V x={196} t={[49, 80, 136, 160]} w={6} />
      <Mini x={185} y={65} t="y3" r /><Mini x={185} y={108} t="y2" r /><Mini x={185} y={149} t="y1" r />
      <H y={177} x1={19} x2={193} t={[38, 47, 71, 144, 167, 175]} />
      <Mini x={25} y={170} t="x1" /><Mini x={58} y={170} t="x2" /><Mini x={107} y={170} t="x3" /><Mini x={155} y={170} t="x2" /><Mini x={183} y={170} t="x1" />
      <Caption x={109} y={193} t={label} s={16.5} />
    </g>
  </Thumb>
);
const Arrows: React.FC<{ p: string }> = ({ p }) => <path d={p} fill="#000" stroke="none" />;
const Step4 = () => (
  <Thumb viewBox="0 0 210 210">
    <Big x={105} y={33} t="阶式四桩台" s={30} c={HEAD} w={300} />
    <rect x="65" y="68" width="98" height="97" fill="none" stroke={OL} strokeWidth="1.6" />
    <Hatch x={107.5} y={105.5} w={14.5} h={22} c={OL} />
    <V x={50} t={[68, 165]} w={11} />
    <Arrows p="M50 69l-3 8h6zM50 164l-3-8h6z" />
    <Big x={33} y={112} t="A" s={28} />
    <H y={178} t={[65, 163]} h={11} />
    <Arrows p="M66 178l8-3v6zM162 178l-8-3v6z" />
    <Big x={117} y={194} t="A" s={28} />
  </Thumb>
);
const Step5 = () => (
  <Thumb viewBox="0 0 210 210">
    <Big x={105} y={33} t="阶式五桩台" s={30} c={HEAD} w={300} />
    <polygon points="124,65.5 178.5,102 157,162 91,162 70.5,102" fill="none" stroke={OL} strokeWidth="1.6" />
    <Hatch x={112.5} y={107} w={23.5} h={14} c={OL} />
    <V x={60} t={[66, 163]} w={10} />
    <Arrows p="M60 67l-3 8h6zM60 162l-3-8h6z" />
    <Big x={38} y={110} t="A" s={26} r />
    <H y={176.5} t={[91, 157]} h={11} />
    <Arrows p="M92 176.5l8-3v6zM156 176.5l-8-3v6z" />
    <Big x={133} y={192} t="B=A/1.5385" s={19.5} f={MONO} />
  </Thumb>
);
const Step6 = () => (
  <Thumb viewBox="0 0 210 210">
    <Big x={105} y={33} t="阶式六桩台" s={30} c={HEAD} w={300} />
    <polygon points="104,65.5 159.5,65.5 186.4,114 159.5,162 104,162 76,114" fill="none" stroke={OL} strokeWidth="1.6" />
    <Hatch x={120} y={105.5} w={22.5} h={14.5} c={OL} />
    <V x={70} t={[66, 163]} w={10} />
    <Arrows p="M70 67l-3 8h6zM70 162l-3-8h6z" />
    <Big x={46} y={105} t="A" s={26} r />
    <H y={176} t={[103, 158]} h={11} />
    <Arrows p="M104 176l8-3v6zM157 176l-8-3v6z" />
    <Big x={136} y={192} t="B=A/1.7326" s={19.5} f={MONO} />
  </Thumb>
);
const Uneq: React.FC<{ dx: number; dy: number; label: string; lx: number }> = ({ dx, dy, label, lx }) => (
  <Thumb viewBox="0 0 210 210">
    <g transform={`translate(${dx} ${dy})`}>
      <polygon points="109,39 136,39 196,125 196,165 47.5,165 47.5,124" fill="none" stroke={Y} strokeWidth="1.5" />
      <Pile x={122} y={70} r={14.5} /><Pile x={86} y={140} r={14.5} /><Pile x={158} y={140} r={14.5} />
      <Hatch x={110} y={103} w={24} h={14} />
      <H y={31} t={[109, 136]} h={5} /><Mini x={121} y={22} t="x5" />
      <V x={36} t={[39, 70, 125, 140, 165]} w={6} />
      <Mini x={27} y={54} t="y4" r /><Mini x={27} y={98} t="y3" r /><Mini x={27} y={132} t="y2" r /><Mini x={27} y={153} t="y1" r />
      <H y={180} t={[47.5, 87, 123, 159, 196]} h={8} />
      <Mini x={65} y={172} t="x1" /><Mini x={103} y={172} t="x2" /><Mini x={139} y={172} t="x2" /><Mini x={175} y={172} t="x1" />
      <Caption x={lx} y={197} t={label} s={16.5} />
    </g>
  </Thumb>
);
const Uneq2 = () => (
  <Thumb viewBox="0 0 210 210">
    <polygon points="77,36 98,36 188,93 188,130 32,130 32,98" fill="none" stroke={Y} strokeWidth="1.5" />
    <Pile x={91} y={57} r={12} /><Pile x={60} y={111} r={12} /><Pile x={160} y={111} r={12} />
    <Hatch x={86} y={81} w={17} h={13} />
    <H y={26} x1={49} x2={110} t={[77, 94, 98]} h={4} />
    <Mini x={56} y={18} t="x5" /><Mini x={104} y={18} t="x6" />
    <V x={23} t={[36, 58, 100, 112, 130]} w={4} />
    <Mini x={16} y={47} t="y4" r /><Mini x={16} y={80} t="y3" r /><Mini x={16} y={106} t="y2" r /><Mini x={16} y={122} t="y1" r />
    <V x={202} t={[93, 112]} w={5} /><Mini x={195} y={103} t="y5" r />
    <H y={141} t={[32, 60.5, 92, 161, 188]} h={6} />
    <Mini x={44} y={134} t="x1" /><Mini x={74} y={134} t="x2" /><Mini x={124} y={134} t="x3" /><Mini x={172} y={134} t="x4" />
    <Caption x={117} y={166} t="不等边承台二" s={18} />
  </Thumb>
);

/* ---------- preview ---------- */
const G = '#00e000', RD = '#ff0000', W = '#fff';
const GT: React.FC<{ x: number; y: number; t: string; r?: boolean; s?: number; a?: 'start' | 'middle' }> = ({ x, y, t, r, s = 14, a = 'middle' }) => (
  <text x={x} y={y} fontSize={s} fill={G} fontFamily={MONO} textAnchor={a} dominantBaseline="middle" transform={r ? `rotate(-90 ${x} ${y})` : undefined}>{t}</text>
);
const WT: React.FC<{ x: number; y: number; t: string; r?: boolean }> = ({ x, y, t, r }) => (
  <text x={x} y={y} fontSize="13.5" fill={W} fontFamily={FONT} dominantBaseline="middle" transform={r ? `rotate(-90 ${x} ${y})` : undefined}>{t}</text>
);
const PreviewArt = () => (
  <Preview viewBox="0 0 696 691">
    <g stroke={W} strokeWidth="1.4" fill="none">
      <rect x="66" y="239" width="280" height="162" />
      <Hatch x={179} y={291} w={50} h={48} n={5} />
      <path d="M218 197v39M218 426v41M15 349h29M346 349h30" />
      <path d="M53 239v62M53 339v62M48 239h10M48 401h10M66 414h125M229 414h117M66 408v12M346 408v12" />
      <rect x="427" y="231" width="228" height="98" />
      <path d="M416 231v36M416 292v37M410 231h13M410 329h13" />
      <path d="M521 404V314h32v90M511 401h47" />
      <path d="M665 236v30M660 236h10M660 266h10M662 281v29M657 281h10M657 310h10" />
      <path d="M571 314v16M566 329h10" />
      <path d="M475 215h18M475 215v30M571 217h60M571 217l-10 24M583 217l-10 24M595 217l-10 24M607 217l-10 24" />
      <path d="M484 272h18M484 272v41" />
      <path d="M565 297h45M565 297l-10 14M577 297l-10 14M589 297l-10 14M601 297l-10 14" />
    </g>
    <g stroke={RD} strokeWidth="3" fill="none">
      <path d="M431 265v-29h217v68M431 281v28h217v-10M431 387v30h217v-30" />
    </g>
    <path d="M433 236H646M433 309H646" stroke="#ffd800" strokeWidth="1" strokeDasharray="1 9" />
    <Big x={197} y={221} t="2" s={28} />
    <Big x={197} y={451} t="2" s={28} />
    <Big x={30} y={335} t="1" s={28} />
    <Big x={362} y={335} t="1" s={28} />
    <Big x={177} y={481} t="矩形承台" s={30} w={300} />
    <Big x={551} y={445} t="均不翻起二" s={31} w={300} />
    <Big x={530} y={481} t="1-1" s={30} />
    <path d="M500 497h58" stroke={W} strokeWidth="1.5" />
    <GT x={51} y={320} t="1500" r />
    <GT x={210} y={414} t="1500" />
    <GT x={405} y={278} t="500" r s={13} />
    <GT x={675} y={250} t="0" r s={13} />
    <GT x={675} y={293} t="10*d" r s={13} />
    <GT x={577} y={320} t="100" r s={13} />
    <WT x={440} y={209} t="横向面筋" /><GT x={494} y={209} t="XMJ" a="start" s={13} />
    <WT x={570} y={210} t="纵向面筋" /><GT x={624} y={210} t="YMJ" a="start" s={13} />
    <WT x={463} y={267} t="横向底筋" /><GT x={515} y={267} t="C12@200" a="start" s={13} />
    <WT x={547} y={292} t="纵向底筋" /><GT x={599} y={292} t="C12@200" a="start" s={13} />
    <WT x={618} y={283} t="侧面筋" r />
    <GT x={632} y={262} t="C12@200" r s={13} />
  </Preview>
);

/* ---------- canvas art ---------- */
const Dodec: React.FC<{ x: number; y: number; r?: number }> = ({ x, y, r = 17 }) => {
  const pts = Array.from({ length: 12 }, (_, k) => {
    const a = (k * Math.PI) / 6 + Math.PI / 12;
    return `${(x + r * Math.cos(a)).toFixed(1)},${(y + r * Math.sin(a)).toFixed(1)}`;
  }).join(' ');
  return <polygon points={pts} fill="none" stroke="#007000" strokeWidth="1.3" />;
};
const redRight: [number, number][] = [[55, 75], [110, 130], [200, 218], [275, 300], [330, 355], [365, 390], [410, 435], [655, 680], [678, 700], [878, 903], [968, 990], [1378, 1403], [1455, 1480]];
const axes: [string, number, number][] = [
  ['17', 730, 2112], ['P', 816, 2112], ['', 845, 2112], ['', 866, 2112], ['', 897, 2112], ['K', 924, 2112], ['H', 954, 2112], ['G', 974, 2112],
  ['18', 1007, 2112], ['E', 1066, 2112], ['D', 1141, 2112], ['C', 1172, 2112], ['B', 1318, 2112], ['A', 1345, 2112], ['B', 1227, 641], ['A', 1255, 641],
];
const CanvasLines = () => (
  <CanvasArt viewBox="623 266 1507 1114">
    <g stroke="#c00000" strokeWidth="2.2" fill="none">
      {redRight.map(([a, b], k) => <path key={k} d={`M1995 ${(820 + a / 2.8 - 0.4).toFixed(1)}L2130 ${(820 + b / 2.8).toFixed(1)}`} />)}
      <path d="M1995 806L2130 815" />
      <path d="M623 1225L2000 1312M623 1253L2000 1340" strokeWidth="2.6" />
    </g>
    <g stroke="#c00000" strokeWidth="1.4" fill="none">
      <path d="M1995 1085L2128 997M1990 1252L2128 1163" />
      <path d="M904 1180L780 1262M1414 1180L1239 1293M1846 1180L1636 1317M2000 1243L1864 1333" />
    </g>
    <g stroke="#007000" strokeWidth="1.5" fill="none">
      <path d="M1995 687L2130 696M1995 747L2130 756M1995 807L2128 717M2043 756L2108 749" />
      <path d="M623 1312L1708 1380M623 1373L771 1380" strokeWidth="1.8" />
      <path d="M1239 1293L1106 1380M1864 1333L1790 1380M1125 1353L1190 1343" />
    </g>
    {axes.map(([t, y, x], k) => (
      <g key={k}>
        <Dodec x={x} y={y} />
        <text x={x} y={y + 1} fontSize={t.length > 1 ? 26 : 27} fill="#eee" fontFamily={FONT} textAnchor="middle" dominantBaseline="middle" textLength={t.length > 1 ? 27 : undefined} lengthAdjust="spacingAndGlyphs">{t}</text>
      </g>
    ))}
    <text x={693} y={1351} fontSize="30" fill="#fff" fontFamily={FONT} dominantBaseline="middle" textLength={60} lengthAdjust="spacingAndGlyphs">4400</text>
    <path d="M699 1340v40" stroke="#0000ff" strokeWidth="5" />
    <path d="M699 1335l-5 18h10z" fill="#0000ff" />
    <text x={694} y={1337} fontSize="18" fill="#0000ff" fontFamily={FONT}>Z</text>
    <text x={708} y={1380} fontSize="18" fill="#00ff00" fontFamily={FONT}>y</text>
  </CanvasArt>
);

/* ---------- view bar icons ---------- */
const VB = '#6b7a90';
const ViewIcons = () => (
  <>
    <ViewGap $h={45}><svg width="34" height="34" viewBox="0 0 34 34" fill="none" strokeWidth="1.6"><circle cx="17" cy="17" r="13" stroke={VB} /><ellipse cx="17" cy="15" rx="16" ry="7" stroke={BLUE} transform="rotate(-30 17 15)" /></svg></ViewGap>
    <ViewGap $h={45}><svg width="32" height="32" viewBox="0 0 32 32" fill="none"><rect x="2" y="2" width="28" height="27" rx="2" stroke={VB} strokeWidth="1.6" /><text x="5" y="25" fontSize="10" fontWeight="700" fill={BLUE} fontFamily={FONT}>2D</text></svg></ViewGap>
    <ViewGap $h={40}><svg width="32" height="32" viewBox="0 0 32 32" fill="none" strokeWidth="1.6"><rect x="2" y="8" width="23" height="22" rx="2" stroke={VB} /><path d="M2 8l6-6h22l-5 6zM30 2v22l-5 6" stroke={BLUE} /></svg></ViewGap>
    <ViewGap $h={18}><Caret $c="#555" /></ViewGap>
    <ViewGap $h={40}><svg width="32" height="32" viewBox="0 0 32 32" fill="none" strokeWidth="1.6"><rect x="2" y="8" width="23" height="22" rx="2" fill="#c4d9f0" stroke={BLUE} /><path d="M2 8l6-6h22l-5 6zM30 2v22l-5 6" stroke={BLUE} /></svg></ViewGap>
    <ViewGap $h={18}><Caret $c="#555" /></ViewGap>
    <ViewGap $h={40}><svg width="32" height="32" viewBox="0 0 32 32" fill="none" stroke={VB} strokeWidth="1.6"><path d="M2 9V2h7M23 2h7v7M30 23v7h-7M9 30H2v-7" /></svg></ViewGap>
    <ViewGap $h={46}><svg width="32" height="32" viewBox="0 0 32 32" fill="none" strokeWidth="1.6"><rect x="2" y="2" width="28" height="28" rx="4" stroke={VB} strokeDasharray="3 2" /><path d="M16 7l8 4v9l-8 4-8-4v-9zM8 11l8 4 8-4M16 15v9" stroke={BLUE} /></svg></ViewGap>
    <ViewSep />
    <ViewGap $h={40}><svg width="32" height="32" viewBox="0 0 32 32" fill="none" strokeWidth="1.5"><path d="M20 30H2V2h28v16" stroke={VB} /><path d="M7 9h18M7 14h4M14 14h11M7 19h5" stroke={VB} /><ellipse cx="25" cy="25" rx="6" ry="4" stroke={BLUE} /><circle cx="25" cy="25" r="1.6" fill={BLUE} /></svg></ViewGap>
  </>
);

/* ---------- data ---------- */
const navA = ['基础梁(F)', '筏板基础(M)', '筏板主筋(R)', '筏板负筋(X)', '基础板带(W)', '集水坑(K)', '柱墩(Y)', '独立基础(D)', '条形基础(T)', '桩承台(V)', '桩(U)', '垫层(X)', '地沟(G)', '砖胎膜'];
const navB = ['建筑面积(U)', '平整场地(V)', '散水(S)', '台阶', '后浇带(JD)', '挑檐(T)', '雨蓬(P)'];
const props1: [string, string, boolean?][] = [['宽度(mm)', '0', true], ['高度(mm)', '0', true], ['顶标高(m)', '层底标高'], ['底标高(m)', '层底标高'], ['备注', '']];
const props2: [string, string][] = [['扣减板/筏板...', '全部扣减'], ['扣减板/筏板...', '全部扣减'], ['保护层厚度(...', '(40)'], ['汇总信息', '(桩承台)'], ['计算设置', '按默认计算设置计算'], ['节点设置', '按默认节点设置计算'], ['搭接设置', '按默认搭接设置计算']];
const props3: [string, string][] = [['计算设置', '按默认计算设置'], ['计算规则', '按默认计算规则'], ['做法信息', '按构件做法']];
const layers: [string, number, 0 | 1 | 2, boolean?][] = [
  ['所有构件', 0, 2], ['轴线', 1, 1], ['轴网', 2, 1], ['辅助轴线', 2, 1, true], ['柱', 1, 2], ['柱', 2, 0], ['构造柱', 2, 1], ['砌体柱', 2, 0], ['约束边缘非阴...', 2, 0, true],
  ['墙', 1, 2], ['剪力墙', 2, 0], ['人防门框墙', 2, 1], ['砌体墙', 2, 0], ['砌体加筋', 2, 0], ['保温墙', 2, 0], ['暗梁', 2, 0], ['墙垛', 2, 0], ['幕墙', 2, 0, true],
  ['门窗洞', 1, 0], ['门', 2, 0], ['窗', 2, 0], ['门联窗', 2, 0], ['墙洞', 2, 0], ['带形窗', 2, 0], ['带形洞', 2, 0], ['飘窗', 2, 0], ['老虎窗', 2, 0], ['过梁', 2, 0], ['壁龛', 2, 0, true],
  ['梁', 1, 2], ['梁', 2, 1], ['连梁', 2, 0],
];

const UserIcon = styled.svg`
  width: 27px; height: 28px; margin-left: 10px; flex: none;
`;
const TailGlyph = styled.svg`
  width: 8px; height: 26px; flex: none;
`;
const PanelGrip = styled(Grip)<{ $mr?: number; $ml?: number }>`
  margin-right: ${p => p.$mr ?? 0}px; margin-left: ${p => p.$ml ?? 8}px;
`;
const SideTab = styled(HeadTab)`
  margin-left: -1px;
`;
const LayersIcon = styled.svg`
  margin-right: -6px; flex: none;
`;

export default function App() {
  return (
    <Page>
      <Global />
      <TitleBar>
        <TitleIcons />
        <TitleText>广联达BIM土建计量平台 GTJ2025 - [C:\Users\86187\Desktop\新建文件夹 (2)\剪力墙（学生应用标准模型）22G 06定额.GTJ]</TitleText>
      </TitleBar>

      <TabsRow>
        {['开始', '工程设置', '建模', '工程量', '视图', '工具', '云应用', '算量协作', '智能提量', 'IGMS'].map((t, k) => <MenuTab key={t} $on={k === 2}>{t}</MenuTab>)}
        <SearchArea>
          <SearchBox>土建计量GTJ中，对齐/单对齐/多对齐可以对齐哪些类型
            <svg width="18" height="18" viewBox="0 0 18 18" fill="none" stroke="#aaa" strokeWidth="1.5" style={{ flex: 'none' }}><circle cx="8" cy="8" r="5" /><path d="M12 12l4 4" /></svg>
          </SearchBox>
          <UserIcon viewBox="0 0 27 28"><path d="M1 0h25v9L17 14l9 5v9H1v-9l9-5-9-5z" fill="#b7d3f3" /><circle cx="13" cy="10" r="4" fill="#5f9be8" /></UserIcon>
          <UserName>ls_jzkt030504</UserName>
          <TailGlyph viewBox="0 0 8 26" fill="none" stroke="#666" strokeWidth="1.5"><path d="M7 1C2 6 2 13 7 16" /></TailGlyph>
        </SearchArea>
      </TabsRow>

      <Ribbon>
        <RGroup $w={344}>
          <RBody>
            <BigSelect>
              <svg width="30" height="42" viewBox="0 0 30 42" fill="none" stroke="#2d7fe0" strokeWidth="2.5"><path d="M3 2v37l9-13 16 1z" /></svg>
              <span>选择</span>
            </BigSelect>
            <RCol $w={148}>
              <T i="pick" t="拾取构件" gap={3} /><T i="batch" t="批量选择" gap={3} /><T i="attr" t="按属性选择" dd />
            </RCol>
            <RCol>
              <T i="find" t="查找图元" /><T i="filter" t="过滤图元" off />
            </RCol>
          </RBody>
          <RLabel>选择</RLabel>
        </RGroup>
        <RGroup $w={305}>
          <RBody $pl={14}>
            <RCol $w={120}>
              <T i="scale" t="设置比例" off gap={6} /><T i="replace" t="查找替换" off gap={6} /><T i="restore" t="还原CAD" off gap={6} />
            </RCol>
            <RCol>
              <T i="floor" t="识别楼层表" off /><T i="cad" t="CAD识别选项" dd />
            </RCol>
          </RBody>
          <RLabel>图纸操作<Caret /></RLabel>
        </RGroup>
        <RGroup $w={413}>
          <RBody $pl={14}>
            <RCol $w={331}>
              <T i="c1" /><T i="c2" /><T i="c3" />
            </RCol>
            <RCol>
              <T t="辅轴" dd /><T t="标注" dd /><T t="图元" />
            </RCol>
          </RBody>
          <RLabel />
        </RGroup>
        <RGroup $w={355}>
          <RBody $pl={16}>
            <RCol $w={80}><T i="del" t="删除" /><T i="copy" t="复制" /><T i="move" t="移动" /></RCol>
            <RCol $w={80}><T i="rot" t="旋转" gap={6} /><T i="mir" t="镜像" gap={6} /><T i="ext" t="延伸" off gap={6} /></RCol>
            <RCol $w={95}><T i="trim" t="修剪" off /><T i="align" t="对齐" dd /><T i="brk" t="打断" off /></RCol>
            <RCol><T i="off" t="偏移" gap={6} /><T i="merge" t="合并" gap={6} /><T i="split" t="分割" gap={6} /></RCol>
          </RBody>
          <RLabel>修改<Caret /></RLabel>
        </RGroup>
        <RGroup $w={105}>
          <RBody $pl={13}>
            <RCol $w={51}><T i="pt" /><T i="line" /><Tool $gap={4}><I n="arc" /><Caret /></Tool></RCol>
            <RCol><T i="ang" /><T i="rect" /></RCol>
          </RBody>
          <RLabel>绘图</RLabel>
        </RGroup>
        <RGroup $w={275}>
          <RBody>
            <BigTool $w={118} $off>
              <svg width="52" height="52" viewBox="0 0 24 24" fill="none" stroke="#c0c0c0" strokeWidth="1.1"><path d="M11 1l6 8-6 8-6-8zM11 1v16M4 15l6 6v2M19 15l-7 6" /><circle cx="17" cy="17" r="3" /><path d="M19 19l2 2" /></svg>
              <span>识别桩承台</span>
            </BigTool>
            <RCol><T i="check" t="校核承台图元" off gap={7} /></RCol>
          </RBody>
          <RLabel>识别桩承台</RLabel>
        </RGroup>
        <RGroup $w={118}>
          <RBody $pl={11}>
            <BigTool $w={74}>
              <svg width="50" height="52" viewBox="0 0 50 52" fill="none" strokeWidth="2.6"><path d="M14 0v36M27 0v22M2 12h36M2 27h36" stroke="#444" /><circle cx="5" cy="12" r="3" fill="#444" /><circle cx="5" cy="27" r="3" fill="#444" /><circle cx="5" cy="42" r="3" fill="#444" /><path d="M5 42h12" stroke="#444" /><path d="M26 32v-5h5M42 27h5v5M47 44v5h-5M31 49h-5v-5" stroke={BLUE} /><circle cx="36" cy="38" r="3" stroke={BLUE} /></svg>
              <span>智能布置</span>
              <Caret />
            </BigTool>
          </RBody>
          <RLabel>智能布置</RLabel>
        </RGroup>
        <RGroup $w={470} $last>
          <RBody $pl={15}>
            <RCol $w={152}><T i="rebar" t="调整钢筋方向" /><T i="slope" t="设置承台放坡" /><T i="unslope" t="取消承台放坡" /></RCol>
            <RCol $w={173}><T i="same" t="应用同名承台" gap={6} /><T i="earth" t="生成土方" gap={6} /><T i="edit" t="编辑承台加强筋" gap={6} /></RCol>
            <RCol><T i="mark" t="查改标注" gap={6} dd /></RCol>
          </RBody>
          <RLabel>桩承台二次编辑</RLabel>
        </RGroup>
      </Ribbon>

      <SelectorBar>
        {['基础层', '基础', '桩承台', 'ZCT-3'].map(t => <SelectorCell key={t}><span>{t}</span><Caret $c="#555" /></SelectorCell>)}
      </SelectorBar>

      <Main>
        <Nav>
          <PanelHead $h={43}>
            <Grip />
            <NavTitle>导航栏<CloseX>✕</CloseX></NavTitle>
          </PanelHead>
          <NavCat $h={62}>
            <svg width="38" height="30" viewBox="0 0 38 30"><path d="M1 27L12 10l5 4 5-11 15 24z" fill="#9aa8bd" /><path d="M17 14l5-11 8 24H16z" fill="#4d6288" /></svg>
            <span>土方</span>
          </NavCat>
          <NavCat $h={63} $on>
            <svg width="38" height="36" viewBox="0 0 38 36"><g fill="#3b8fe8"><path d="M19 1l8 4v9l-8 4-8-4V5z" /><path d="M9 17l8 4v9l-8 4-8-4v-9z" /><path d="M29 17l8 4v9l-8 4-8-4v-9z" /></g><g fill="#7fb8f5"><path d="M19 1l8 4-8 4-8-4zM9 17l8 4-8 4-8-4zM29 17l8 4-8 4-8-4z" /></g></svg>
            <span>基础</span>
          </NavCat>
          {navA.map((t, k) => <NavItem key={t} $on={k === 9}>{t}</NavItem>)}
          <NavCat $h={63}>
            <LayersIcon width="36" height="34" viewBox="0 0 36 34"><path d="M18 22L1 15l5-2 12 5 12-5 5 2z" fill="#a8b4c6" /><path d="M18 32L1 24l5-2 12 5 12-5 5 2z" fill="#4d6288" /><path d="M18 1L1 9l17 7 17-7z" fill="#7d8da6" /></LayersIcon>
            <span>其它</span>
          </NavCat>
          {navB.map(t => <NavItem key={t}>{t}</NavItem>)}
          <NavScroll />
        </Nav>

        <MidCol>
          <Panel $h={407}>
            <PanelHead>
              <PanelGrip $mr={17} />
              <HeadTab $on>构件列表</HeadTab>
              <SideTab>图纸管理</SideTab>
            </PanelHead>
            <ToolRow>
              <ToolBtn $w={68}><Svg s={26}><path d="M3 2h13l5 5v15H3z" stroke={INK} /><path d="M2 1h6v6H2z" fill={BLUE} /></Svg><Caret $c="#bbb" /></ToolBtn>
              <ToolBtn><Svg s={26}><rect x="8" y="2" width="14" height="14" rx="2" fill="#c4d9f0" stroke={BLUE} /><path d="M8 7H3v15h15v-6" stroke={INK} /></Svg></ToolBtn>
              <ToolBtn><Svg s={26}><path d="M5 6h14v16H5zM3 5h18M9 5V2h6v3" stroke={INK} /><path d="M10 11v7M14 11v7" stroke="#e33" /></Svg></ToolBtn>
              <ToolBtn><Svg s={26}><rect x="8" y="2" width="14" height="14" rx="2" stroke={BLUE} /><path d="M8 16v-6H5v12h12v-3M2 13v10h11" stroke={INK} /></Svg></ToolBtn>
              <ToolBtn><Svg s={26}><path d="M21 14V2H3v20h11" stroke={INK} /><path d="M9 2v20M9 10h12" stroke={INK} /><rect x="15" y="15" width="7" height="7" stroke={BLUE} fill="#c4d9f0" /></Svg></ToolBtn>
            </ToolRow>
            <SearchInput>搜索构件...</SearchInput>
            <Tree>
              <TreeRow><Arrow /><span>ZCT-1 &lt;1&gt;</span></TreeRow>
              <TreeRow $lv={1}><span>(底)  ZCT-1-1</span></TreeRow>
              <TreeRow><Arrow /><span>ZCT-2 &lt;1&gt;</span></TreeRow>
              <TreeRow $lv={1}><span>(底)  ZCT-2-1</span></TreeRow>
              <TreeRow $sel><TreeGap /><span>ZCT-3 &lt;0&gt;</span></TreeRow>
            </Tree>
          </Panel>
          <Panel $h={720}>
            <PanelHead $h={45}>
              <PanelGrip $mr={17} />
              <HeadTab $on>属性列表</HeadTab>
              <SideTab>图层管理</SideTab>
            </PanelHead>
            <TableHead>
              <HeadCell $w={150}>属性名称</HeadCell>
              <HeadCell $w={176}>属性值</HeadCell>
              <HeadCell $w={70}>附加</HeadCell>
            </TableHead>
            {props1.map(([a, b, c]) => <PropRow key={a}><PropLabel $blue={c}>{a}</PropLabel><PropValue>{b}</PropValue></PropRow>)}
            <Section><Arrow />钢筋业务属性</Section>
            {props2.map(([a, b], k) => <PropRow key={k}><PropLabel>{a}</PropLabel><PropValue>{b}</PropValue></PropRow>)}
            <Section><Arrow />土建业务属性</Section>
            {props3.map(([a, b], k) => <PropRow key={k}><PropLabel>{a}</PropLabel><PropValue>{b}</PropValue></PropRow>)}
          </Panel>
        </MidCol>

        <Canvas>
          <CanvasLines />
          <ViewBar><ViewIcons /></ViewBar>
          <Handle>›</Handle>
        </Canvas>

        <RightPanel>
          <PanelHead $h={43}>
            <PanelGrip $ml={10} />
            <RightTitle>显示设置</RightTitle>
          </PanelHead>
          <RTabs>
            <RTab $on>图元显示</RTab>
            <RTab>楼层显示</RTab>
          </RTabs>
          <LayerTable>
            <LayerHead><LayerName>图层构件</LayerName><LayerShow>显示</LayerShow></LayerHead>
            {layers.map(([t, lv, st, last], k) => (
              <LayerRow key={k}>
                <LayerCell $lv={lv} $leafLast={last} $first={k === 0}>
                  {lv === 2 && !last && <LeafTick />}
                  {lv < 2 && <Expander />}
                  <span>{t}</span>
                </LayerCell>
                <CheckCell>
                  <Check $s={st}>{st === 1 && <svg width="12" height="12" viewBox="0 0 12 12" fill="none" stroke="#fff" strokeWidth="2"><path d="M1 6l3 4 7-8" /></svg>}</Check>
                </CheckCell>
              </LayerRow>
            ))}
          </LayerTable>
        </RightPanel>
      </Main>

      <Tip>
        <TipClose>X</TipClose>
        <TipBody>可以多人协作建模啦，提升效率，<br />缩短周期，快来试试吧！</TipBody>
        <TipFoot>不再提示</TipFoot>
      </Tip>

      <Dialog>
        <DlgHead>
          选择参数化图形
          <WinBtns>
            <svg width="15" height="15" viewBox="0 0 15 15" fill="none" stroke="#777" strokeWidth="1.5"><rect x="1" y="1" width="13" height="13" /></svg>
            <svg width="16" height="16" viewBox="0 0 16 16" fill="none" stroke="#777" strokeWidth="1.5"><path d="M1 1l14 14M15 1L1 15" /></svg>
          </WinBtns>
        </DlgHead>
        <DlgOptions>
          <OptLabel>参数化截面类型:</OptLabel>
          <OptRight>
            <OptLabel $w={64}>单位:</OptLabel>
            <OptLabel $w={43} $muted>mm</OptLabel>
            <Radio />
            <OptLabel $w={119}>角度放坡形式</OptLabel>
            <Radio $on />
            <OptLabel>底宽放坡形式</OptLabel>
            <PrimaryBtn $ml="auto">配筋形式</PrimaryBtn>
          </OptRight>
        </DlgOptions>
        <DlgBody>
          <ShapeFrame>
            <ShapeGrid>
              <ShapeCell $pt={6} $sel><RectThumb /></ShapeCell>
              <ShapeCell $pt={6}><TriThumb dx={0} dy={0} label="三桩承台一" /></ShapeCell>
              <ShapeCell $pt={6}><TriThumb dx={-2} dy={-5} label="三桩承台二" /></ShapeCell>
              <ShapeCell $pt={10}><Step4 /></ShapeCell>
              <ShapeCell $pt={10}><Step5 /></ShapeCell>
              <ShapeCell $pt={10}><Step6 /></ShapeCell>
              <ShapeCell $pt={9}><Uneq dx={0} dy={0} label="不等边承台一" lx={126} /></ShapeCell>
              <ShapeCell $pt={9}><Uneq2 /></ShapeCell>
              <ShapeCell $pt={9}><Uneq dx={-3} dy={-2} label="不等边承台三" lx={118} /></ShapeCell>
            </ShapeGrid>
            <ScrollTrack><ScrollThumb /></ScrollTrack>
          </ShapeFrame>
          <PreviewArt />
        </DlgBody>
        <DlgFoot>
          <PrimaryBtn>确定</PrimaryBtn>
          <GhostBtn>取消</GhostBtn>
        </DlgFoot>
        <ResizeDots />
      </Dialog>
      <RedBox $x={1383} $y={369} $w={76} $h={54} />
      <RedBox $x={1560} $y={345} $w={168} $h={116} />
    </Page>
  );
}
